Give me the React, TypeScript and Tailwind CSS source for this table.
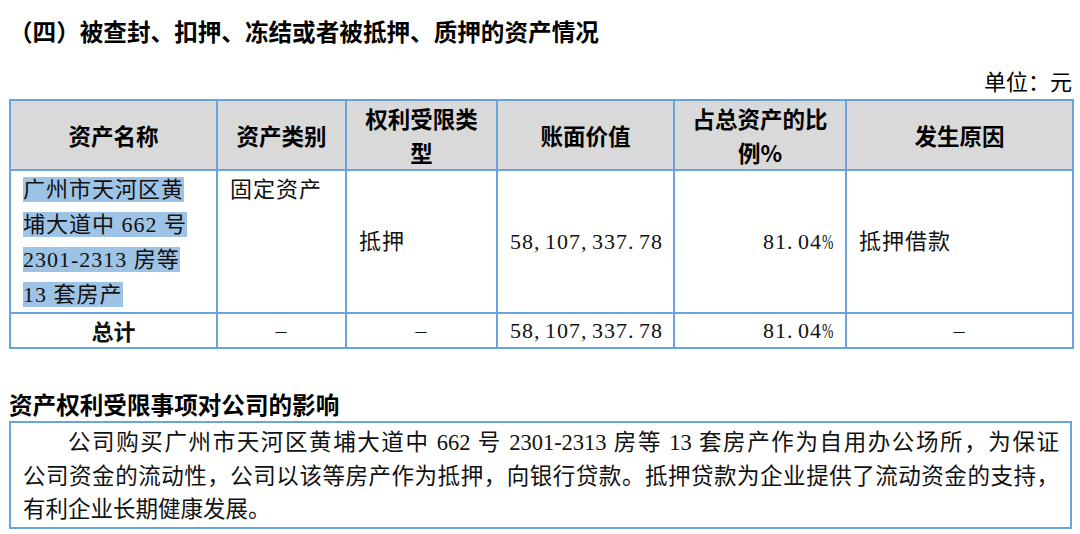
const serif = "font-['Liberation_Serif','Noto_Sans_CJK_SC',serif]";
const sans = "font-['Noto_Sans_CJK_SC','Liberation_Sans',sans-serif]";

function Num({ value }: { value: string }) {
  return (
    <span className="whitespace-nowrap">
      {value.split("").map((ch, i) =>
        /[0-9]/.test(ch) ? (
          <span key={i}>{ch}</span>
        ) : ch === "%" ? (
          <span key={i} className="inline-block w-[0.5em] origin-left scale-x-[0.62] text-left">
            {ch}
          </span>
        ) : (
          <span key={i} className="inline-block w-[0.5em] text-left">
            {ch}
          </span>
        )
      )}
    </span>
  );
}

const th = "border-2 border-[#6ba3dc] bg-[#d9d9d9] px-2 py-0 text-center align-middle font-bold text-[22.5px] leading-[34px] " + sans;
const td = "border-2 border-[#6ba3dc] px-[12px] py-0 text-[22px] tracking-[1px] text-[#111] " + serif;

const App = () => {
  return (
    <div className="w-[1080px] h-[534px] bg-white overflow-hidden text-black">
      <h1 className={`pt-[15px] pl-[9px] text-[23.6px] leading-[32px] font-bold ${sans}`}>
        （四）被查封、扣押、冻结或者被抵押、质押的资产情况
      </h1>

      <p className={`mt-[20px] pr-[8px] text-right text-[22px] leading-[32px] ${serif}`}>单位：元</p>

      <table className="ml-[9px] mt-0 w-[1063px] table-fixed border-collapse">
        <colgroup>
          <col className="w-[207px]" />
          <col className="w-[129px]" />
          <col className="w-[151px]" />
          <col className="w-[177px]" />
          <col className="w-[172px]" />
          <col className="w-[227px]" />
        </colgroup>
        <thead>
          <tr className="h-[70px]">
            <th className={th}>资产名称</th>
            <th className={th}>资产类别</th>
            <th className={th}>
              权利受限类
              <br />型
            </th>
            <th className={th}>账面价值</th>
            <th className={th}>
              占总资产的比
              <br />例%
            </th>
            <th className={th}>发生原因</th>
          </tr>
        </thead>
        <tbody>
          <tr className="h-[143px] leading-[35px]">
            <td className={`${td} align-top pt-[1px] tracking-[1.7px]`}>
              <span className="bg-[#9dc3e6]">广州市天河区黄</span>
              <br />
              <span className="bg-[#9dc3e6]">埔大道中 662 号</span>
              <br />
              <span className="bg-[#9dc3e6]">2301-2313 房等</span>
              <br />
              <span className="bg-[#9dc3e6]">13 套房产</span>
            </td>
            <td className={`${td} align-top pt-[1px]`}>固定资产</td>
            <td className={`${td} align-middle`}>抵押</td>
            <td className={`${td} align-middle text-right`}>
              <Num value="58,107,337.78" />
            </td>
            <td className={`${td} align-middle text-right`}>
              <Num value="81.04%" />
            </td>
            <td className={`${td} align-middle`}>抵押借款</td>
          </tr>
          <tr className="h-[35px] leading-[31px]">
            <td className={`${td} text-center font-bold tracking-normal ${sans}`}>总计</td>
            <td className={`${td} text-center`}>–</td>
            <td className={`${td} text-center`}>–</td>
            <td className={`${td} text-right`}>
              <Num value="58,107,337.78" />
            </td>
            <td className={`${td} text-right`}>
              <Num value="81.04%" />
            </td>
            <td className={`${td} text-center`}>–</td>
          </tr>
        </tbody>
      </table>

      <h2 className={`mt-[39px] pl-[9px] text-[23.6px] leading-[32px] font-bold ${sans}`}>
        资产权利受限事项对公司的影响
      </h2>

      <div
        className={`ml-[9px] mt-[1px] w-[1063px] border-2 border-[#6ba3dc] pt-[3px] pl-[12px] pr-[11px] text-[22.5px] leading-[33.5px] text-[#111] ${serif}`}
      >
        <div className="indent-[45px] text-justify [text-align-last:justify]">
          公司购买广州市天河区黄埔大道中 662 号 2301-2313 房等 13 套房产作为自用办公场所，为保证
        </div>
        <div className="whitespace-nowrap text-justify [text-align-last:justify]">
          公司资金的流动性，公司以该等房产作为抵押，向银行贷款。抵押贷款为企业提供了流动资金的支持，
        </div>
        <div>有利企业长期健康发展。</div>
      </div>
    </div>
  );
};

export default App;
